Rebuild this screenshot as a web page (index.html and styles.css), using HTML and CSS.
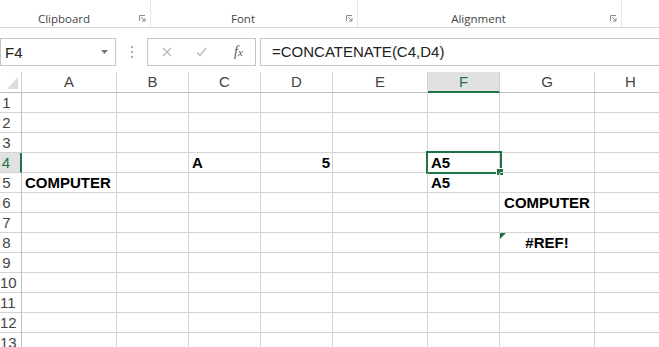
FILE: index.html
```html
<!DOCTYPE html>
<html lang="en">
<head>
    <meta charset="UTF-8">
    <title>CONCATENATE</title>
    <link rel="stylesheet" href="styles.css">
</head>
<body>

    <div class="ribbon">
        <div class="group group-clip">
            <span class="glabel">Clipboard</span>
            <svg class="launcher" width="7" height="7" viewBox="0 0 7 7"><path d="M0.5 6V0.5H6" fill="none" stroke="#8a8a8a"/><path d="M2 2L6 6M6 3V6H3" fill="none" stroke="#8a8a8a"/></svg>
        </div>
        <div class="group group-font">
            <span class="glabel">Font</span>
            <svg class="launcher" width="7" height="7" viewBox="0 0 7 7"><path d="M0.5 6V0.5H6" fill="none" stroke="#8a8a8a"/><path d="M2 2L6 6M6 3V6H3" fill="none" stroke="#8a8a8a"/></svg>
        </div>
        <div class="group group-align">
            <span class="glabel">Alignment</span>
            <svg class="launcher" width="7" height="7" viewBox="0 0 7 7"><path d="M0.5 6V0.5H6" fill="none" stroke="#8a8a8a"/><path d="M2 2L6 6M6 3V6H3" fill="none" stroke="#8a8a8a"/></svg>
        </div>
    </div>

    <div class="fbar">
        <div class="namebox">
            <span>F4</span>
            <svg width="7" height="4" viewBox="0 0 7 4"><path d="M0 0H7L3.5 4Z" fill="#777"/></svg>
        </div>
        <div class="dots">
            <svg width="2" height="12" viewBox="0 0 2 12"><rect y="0" width="2" height="2" fill="#aaa"/><rect y="5" width="2" height="2" fill="#aaa"/><rect y="10" width="2" height="2" fill="#aaa"/></svg>
        </div>
        <div class="fxbox">
            <svg class="ico-x" width="10" height="10" viewBox="0 0 10 10"><path d="M1 1L9 9M9 1L1 9" stroke="#b9b9b9" stroke-width="1.3"/></svg>
            <svg class="ico-ok" width="11" height="10" viewBox="0 0 11 10"><path d="M1 5.5L4 8.5L10 1" fill="none" stroke="#b9b9b9" stroke-width="1.4"/></svg>
            <span class="fx">f<span class="fx-x">x</span></span>
        </div>
        <div class="finput">=CONCATENATE(C4,D4)</div>
    </div>

    <div class="sheet">
        <div class="hd corner">
            <svg width="11" height="12" viewBox="0 0 11 12"><path d="M0 12L11 0V12Z" fill="#dcdcdc"/></svg>
        </div>
        <div class="hd">A</div>
        <div class="hd">B</div>
        <div class="hd">C</div>
        <div class="hd">D</div>
        <div class="hd">E</div>
        <div class="hd hd-active-col">F</div>
        <div class="hd">G</div>
        <div class="hd">H</div>

        <div class="rh">1</div><div class="c"></div><div class="c"></div><div class="c"></div><div class="c"></div><div class="c"></div><div class="c"></div><div class="c"></div><div class="c"></div>
        <div class="rh">2</div><div class="c"></div><div class="c"></div><div class="c"></div><div class="c"></div><div class="c"></div><div class="c"></div><div class="c"></div><div class="c"></div>
        <div class="rh">3</div><div class="c"></div><div class="c"></div><div class="c"></div><div class="c"></div><div class="c"></div><div class="c"></div><div class="c"></div><div class="c"></div>
        <div class="rh rh-active">4</div><div class="c"></div><div class="c"></div><div class="c">A</div><div class="c num">5</div><div class="c"></div>
        <div class="c selected">A5<div class="sel"><span class="handle"></span></div></div><div class="c"></div><div class="c"></div>
        <div class="rh">5</div><div class="c">COMPUTER</div><div class="c"></div><div class="c"></div><div class="c"></div><div class="c"></div><div class="c">A5</div><div class="c"></div><div class="c"></div>
        <div class="rh">6</div><div class="c"></div><div class="c"></div><div class="c"></div><div class="c"></div><div class="c"></div><div class="c"></div><div class="c mid">COMPUTER</div><div class="c"></div>
        <div class="rh">7</div><div class="c"></div><div class="c"></div><div class="c"></div><div class="c"></div><div class="c"></div><div class="c"></div><div class="c"></div><div class="c"></div>
        <div class="rh">8</div><div class="c"></div><div class="c"></div><div class="c"></div><div class="c"></div><div class="c"></div><div class="c"></div><div class="c mid err">#REF!<span class="err-flag"></span></div><div class="c"></div>
        <div class="rh">9</div><div class="c"></div><div class="c"></div><div class="c"></div><div class="c"></div><div class="c"></div><div class="c"></div><div class="c"></div><div class="c"></div>
        <div class="rh">10</div><div class="c"></div><div class="c"></div><div class="c"></div><div class="c"></div><div class="c"></div><div class="c"></div><div class="c"></div><div class="c"></div>
        <div class="rh">11</div><div class="c"></div><div class="c"></div><div class="c"></div><div class="c"></div><div class="c"></div><div class="c"></div><div class="c"></div><div class="c"></div>
        <div class="rh">12</div><div class="c"></div><div class="c"></div><div class="c"></div><div class="c"></div><div class="c"></div><div class="c"></div><div class="c"></div><div class="c"></div>
        <div class="rh">13</div><div class="c"></div><div class="c"></div><div class="c"></div><div class="c"></div><div class="c"></div><div class="c"></div><div class="c"></div><div class="c"></div>
    </div>

</body>
</html>
```

FILE: styles.css
```css
body {
    margin: 0;
    width: 659px;
    height: 347px;
    overflow: hidden;
    background: #fff;
    font-family: "Liberation Sans", Arial, sans-serif;
    color: #222;
}

/* ribbon strip */
.ribbon {
    display: flex;
    height: 27px;
    border-bottom: 1px solid #d6d6d6;
}
.group {
    display: flex;
    align-items: flex-end;
    height: 27px;
    border-right: 1px solid #e6e6e6;
}
.group-clip { width: 150px; }
.group-font { width: 206px; }
.group-align { width: 263px; }
.glabel {
    flex: 1;
    text-align: center;
    font-family: "Open Sans", sans-serif;
    font-size: 11.5px;
    line-height: 16px;
    color: #444;
}
.launcher {
    margin: 0 4px 5px 11px;
}

/* formula bar */
.fbar {
    display: flex;
    align-items: flex-start;
    height: 44px;
    padding-top: 10px;
    box-sizing: border-box;
}
.namebox {
    width: 116px;
    height: 28px;
    box-sizing: border-box;
    border: 1px solid #c6c6c6;
    display: flex;
    align-items: center;
    justify-content: space-between;
    padding: 0 7px 0 4px;
    font-size: 15px;
}
.dots {
    width: 31px;
    height: 28px;
    display: flex;
    align-items: center;
    justify-content: center;
}
.fxbox {
    width: 109px;
    height: 28px;
    box-sizing: border-box;
    border: 1px solid #c6c6c6;
    display: flex;
    align-items: center;
}
.ico-x { margin-left: 14px; }
.ico-ok { margin-left: 24px; }
.fx {
    margin-left: 27px;
    font-family: "Liberation Serif", serif;
    font-style: italic;
    font-size: 14px;
    color: #555;
}
.fx-x { font-size: 11px; }
.finput {
    flex: 1;
    height: 28px;
    margin-left: 4px;
    box-sizing: border-box;
    border: 1px solid #c6c6c6;
    border-right: none;
    padding-left: 11px;
    font-size: 15px;
    line-height: 26px;
    white-space: nowrap;
}

/* grid */
.sheet {
    display: grid;
    grid-template-columns: 22px 95px 72px 72px 72px 95px 72px 95px 72px;
    grid-template-rows: 21px repeat(13, 20px);
}
.sheet > div {
    box-sizing: border-box;
    border-right: 1px solid #d4d4d4;
    border-bottom: 1px solid #d4d4d4;
    white-space: nowrap;
}
.hd {
    font-size: 15px;
    line-height: 20px;
    text-align: center;
    color: #444;
    border-bottom-color: #bdbdbd !important;
}
.corner {
    display: flex;
    justify-content: flex-end;
    align-items: flex-end;
    padding: 0 3px 3px 0;
}
.hd-active-col {
    background: #e1e1e1;
    color: #217346;
    border-bottom: 2px solid #217346 !important;
    line-height: 19px;
}
.rh {
    font-size: 15px;
    line-height: 19px;
    text-align: center;
    padding-right: 8px;
    color: #444;
    border-right-color: #bdbdbd !important;
    overflow: hidden;
}
.rh-active {
    background: #e1e1e1;
    color: #217346;
    border-right: 2px solid #217346 !important;
}
.c {
    position: relative;
    font-size: 15px;
    font-weight: bold;
    line-height: 19px;
    padding: 0 2px 0 3px;
    color: #000;
}
.num { text-align: right; }
.mid {
    text-align: center;
    padding: 0;
}
.sel {
    position: absolute;
    left: -2px;
    top: -2px;
    width: 76px;
    height: 23px;
    box-sizing: border-box;
    border: 2px solid #217346;
}
.handle {
    position: absolute;
    right: -4px;
    bottom: -4px;
    width: 6px;
    height: 6px;
    background: #217346;
    border: 1px solid #fff;
}
.err-flag {
    position: absolute;
    left: 0;
    top: 0;
    width: 0;
    height: 0;
    border-top: 6px solid #217346;
    border-right: 6px solid transparent;
}
```
